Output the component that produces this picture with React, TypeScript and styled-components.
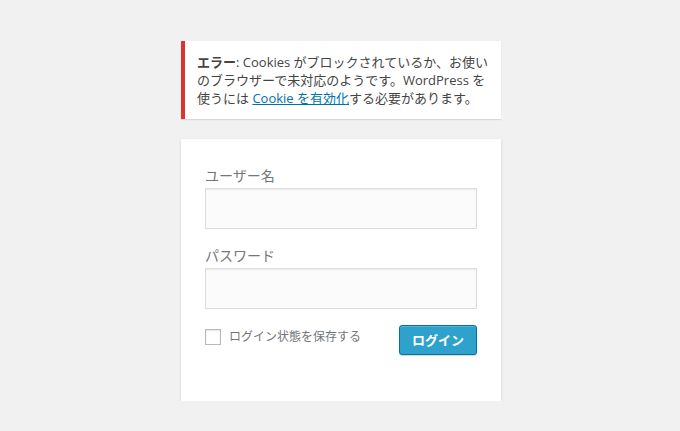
import React from 'react'
import styled, { createGlobalStyle } from 'styled-components'

const GlobalStyle = createGlobalStyle`
  body {
    margin: 0;
    background: #f1f1f1;
    color: #444;
    font-family: "Open Sans", "Noto Sans CJK JP", sans-serif;
  }
`

const Login = styled.div`
  width: 320px;
  margin: 0 auto;
  padding: 41px 0 0 2px;
`

const ErrorNotice = styled.div`
  background: #fff;
  border-left: 4px solid #dc3232;
  box-shadow: 0 1px 1px 0 rgba(0, 0, 0, 0.1);
  padding: 12px;
  margin-bottom: 20px;
  font-size: 13px;
  line-height: 18px;
  white-space: nowrap;
  color: #444;

  strong {
    font-weight: 700;
  }

  a {
    color: #0073aa;
    text-decoration: underline;
  }
`

const Form = styled.form`
  background: #fff;
  box-shadow: 0 1px 3px rgba(0, 0, 0, 0.13);
  padding: 26px 24px 46px;
  display: flex;
  flex-direction: column;
`

const Label = styled.label`
  display: block;
  font-size: 14px;
  line-height: 21px;
  color: #72777c;
`

const Input = styled.input`
  display: block;
  box-sizing: border-box;
  width: 100%;
  height: 41px;
  margin: 2px 0 16px;
  padding: 3px;
  font-size: 24px;
  background: #fbfbfb;
  border: 1px solid #ddd;
  box-shadow: inset 0 1px 2px rgba(0, 0, 0, 0.07);
  outline: none;
`

const SubmitRow = styled.div`
  display: flex;
  justify-content: space-between;
  align-items: flex-start;
`

const Remember = styled.label`
  display: flex;
  align-items: center;
  margin-top: 2px;
  font-size: 12px;
  line-height: 19px;
  color: #72777c;
`

const Checkbox = styled.span`
  box-sizing: border-box;
  width: 16px;
  height: 16px;
  margin-right: 8px;
  border: 1px solid #b4b9be;
  background: #fff;
  box-shadow: inset 0 1px 2px rgba(0, 0, 0, 0.1);
`

const Button = styled.button`
  box-sizing: border-box;
  height: 30px;
  padding: 0 12px;
  background: #2ea2cc;
  border: 1px solid #0074a2;
  border-radius: 3px;
  box-shadow: inset 0 1px 0 rgba(120, 200, 230, 0.5), 0 1px 0 rgba(0, 0, 0, 0.15);
  color: #fff;
  font-family: "Noto Sans CJK JP", sans-serif;
  font-size: 13px;
  font-weight: 700;
  line-height: 28px;
  cursor: pointer;
`

const App: React.FC = () => {
  return (
    <>
      <GlobalStyle />
      <Login>
        <ErrorNotice>
          <strong>エラー</strong>: Cookies がブロックされているか、お使い
          <br />
          のブラウザーで未対応のようです。WordPress を
          <br />
          使うには <a href="#">Cookie を有効化</a>する必要があります。
        </ErrorNotice>
        <Form onSubmit={(e) => e.preventDefault()}>
          <Label htmlFor="user_login">ユーザー名</Label>
          <Input id="user_login" type="text" />
          <Label htmlFor="user_pass">パスワード</Label>
          <Input id="user_pass" type="password" />
          <SubmitRow>
            <Remember>
              <Checkbox />
              ログイン状態を保存する
            </Remember>
            <Button type="submit">ログイン</Button>
          </SubmitRow>
        </Form>
      </Login>
    </>
  )
}

export default App
